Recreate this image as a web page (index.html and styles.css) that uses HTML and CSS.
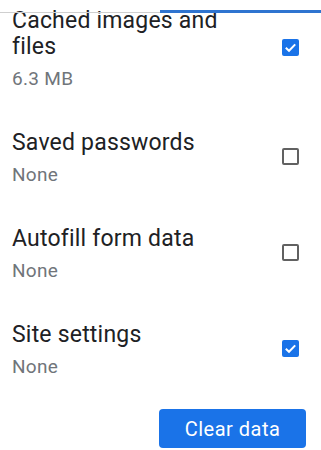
FILE: index.html
```html
<!DOCTYPE html>
<html>
<head>
<meta charset="utf-8">
<link rel="stylesheet" href="styles.css">
</head>
<body>
<div class="page">
  <div class="edge">
    <div class="edge-left"></div>
    <div class="edge-right"></div>
  </div>
  <div class="list">
    <div class="row">
      <div class="text">
        <div class="title">Cached images and files</div>
        <div class="sub">6.3 MB</div>
      </div>
      <div class="box checked"><svg viewBox="0 0 17 17" width="17" height="17"><path d="M3.8 8.8 L7 11.8 L13.2 5.4" fill="none" stroke="#fff" stroke-width="2"/></svg></div>
    </div>
    <div class="row">
      <div class="text">
        <div class="title">Saved passwords</div>
        <div class="sub">None</div>
      </div>
      <div class="box"></div>
    </div>
    <div class="row">
      <div class="text">
        <div class="title">Autofill form data</div>
        <div class="sub">None</div>
      </div>
      <div class="box"></div>
    </div>
    <div class="row">
      <div class="text">
        <div class="title">Site settings</div>
        <div class="sub">None</div>
      </div>
      <div class="box checked"><svg viewBox="0 0 17 17" width="17" height="17"><path d="M3.8 8.8 L7 11.8 L13.2 5.4" fill="none" stroke="#fff" stroke-width="2"/></svg></div>
    </div>
  </div>
  <div class="actions">
    <button class="btn">Clear data</button>
  </div>
</div>
</body>
</html>
```
FILE: styles.css
```css
html, body {
  margin: 0;
  padding: 0;
  background: #fff;
}
.page {
  position: relative;
  width: 321px;
  height: 450px;
  overflow: hidden;
  font-family: Roboto, "Noto Sans", sans-serif;
}
.edge {
  position: absolute;
  top: 0;
  left: 0;
  right: 0;
  height: 14px;
  display: flex;
  align-items: flex-end;
}
.edge-left {
  width: 160px;
  height: 1px;
  margin-bottom: 1px;
  background: #cfcfcf;
}
.edge-right {
  flex: 1;
  height: 3px;
  margin-bottom: 1px;
  background: #2f74d0;
}
.list {
  padding: 8px 22px 0 12px;
  display: flex;
  flex-direction: column;
  gap: 40px;
}
.row {
  display: flex;
  align-items: center;
}
.text {
  flex: 1;
  padding-right: 50px;
}
.title {
  font-size: 23px;
  line-height: 26px;
  color: #202124;
  letter-spacing: 0.2px;
}
.sub {
  margin-top: 8px;
  font-size: 19px;
  line-height: 22px;
  color: #70757a;
  letter-spacing: 0.3px;
}
.box {
  width: 17px;
  height: 17px;
  box-sizing: border-box;
  border: 2px solid #616161;
  border-radius: 2px;
  margin-bottom: 4px;
  flex: none;
}
.box.checked {
  border: none;
  background: #1a73e8;
}
.box svg {
  display: block;
}
.actions {
  display: flex;
  justify-content: flex-end;
  padding: 31px 15px 0 0;
}
.btn {
  width: 147px;
  height: 39px;
  border: none;
  border-radius: 4px;
  background: #1a73e8;
  color: #fff;
  font-family: Roboto, "Noto Sans", sans-serif;
  font-size: 20px;
  letter-spacing: 0.5px;
  padding: 0;
}
```
